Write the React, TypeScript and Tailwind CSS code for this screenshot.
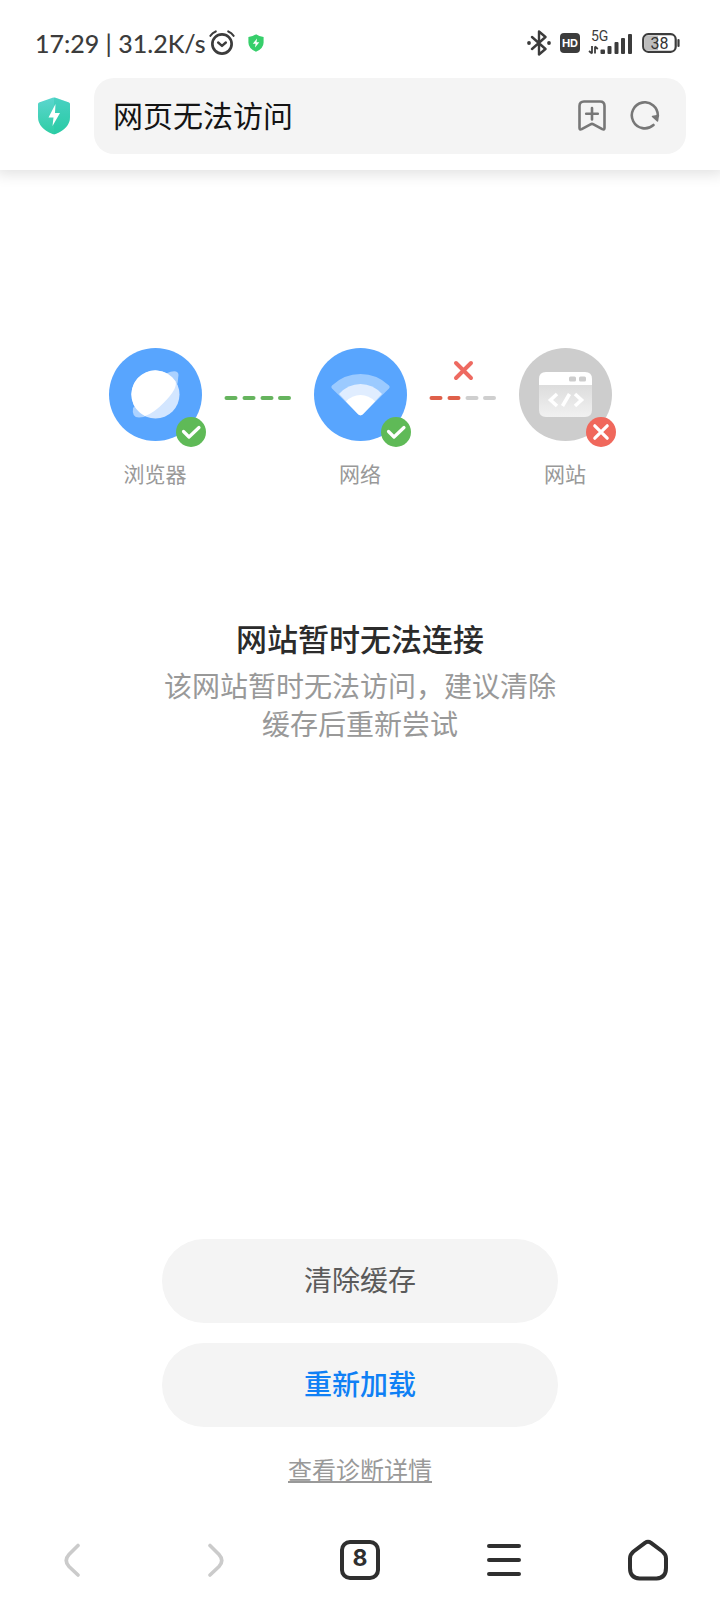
import type { ReactNode } from "react";

const StatusBar = function () {
  return (
    <div className="flex h-[78px] items-center justify-between pt-2 pl-[35px] pr-10 text-[#3c3c3c]">
      <div className="flex items-center">
        <span className="font-['Lato'] text-[25px] leading-8 font-medium">17:29 | 31.2K/s</span>
        <svg viewBox="0 0 27 27" className="ml-[3px] h-[26px] w-[26px]" fill="none" stroke="currentColor" strokeWidth="2.8" strokeLinecap="round" strokeLinejoin="round">
          <circle cx="13.5" cy="14.5" r="10" />
          <path d="M9.5 13l4 3.5 4-3.5" strokeWidth="2.5" />
          <path d="M1.5 6Q3.5 2.8 7 1.5M25.5 6Q23.5 2.8 20 1.5" strokeWidth="2.2" />
        </svg>
        <svg viewBox="0 0 16 18" className="ml-[13px] h-[18px] w-4">
          <path d="M8 0.3Q11 2.6 15.6 3V8.5Q15.6 14.5 8 17.8Q0.4 14.5 0.4 8.5V3Q5 2.6 8 0.3Z" fill="#37cf6b" />
          <path d="M9 4.5L4.8 9.8H7.6L7 13.5L11.3 8.2H8.5Z" fill="#fff" />
        </svg>
      </div>

      <div className="flex items-center">
        <svg viewBox="0 0 24 26" className="h-[26px] w-6" fill="none" stroke="currentColor" strokeWidth="2.4" strokeLinecap="round" strokeLinejoin="round">
          <path d="M5 7L18.5 19L12 24.5V1.5L18.5 7L5 19" />
          <circle cx="2" cy="13" r="1.9" fill="currentColor" stroke="none" />
          <circle cx="22" cy="13" r="1.9" fill="currentColor" stroke="none" />
        </svg>
        <span className="ml-[9px] flex h-5 w-5 items-center justify-center rounded-sm bg-[#3c3c3c] font-['Inter'] text-[11px] leading-none font-bold text-white">
          HD
        </span>
        <svg viewBox="0 -5 46 36" className="ml-2 h-9 w-[46px]" fill="currentColor">
          <text x="3" y="11" fontSize="14" fontFamily="Roboto, sans-serif">5G</text>
          <path d="M4 16V23.5M1 21L4 23.5M7 23.5V16.5M7 16.5L9.8 19" fill="none" stroke="currentColor" strokeWidth="1.8" />
          <rect x="12.5" y="19.5" width="4.5" height="4.5" rx="1" />
          <rect x="19.5" y="16" width="4" height="8" rx="1" />
          <rect x="26.5" y="12" width="4" height="12" rx="1" />
          <rect x="33" y="8" width="4" height="16" rx="1" />
          <rect x="40" y="4" width="4" height="20" rx="1" />
        </svg>
        <svg viewBox="0 0 38 20" className="ml-2 h-5 w-[38px]">
          <rect x="3" y="3" width="13" height="14" fill="#bdbdbd" />
          <rect x="1.2" y="1.2" width="32.5" height="17.6" rx="5" fill="none" stroke="#3c3c3c" strokeWidth="2.2" />
          <path d="M36.5 7V13" stroke="#3c3c3c" strokeWidth="2.2" strokeLinecap="round" />
          <text x="17.5" y="15.5" textAnchor="middle" fontSize="16" fontFamily="Roboto, sans-serif" fill="#333">38</text>
        </svg>
      </div>
    </div>
  );
};

const AddressBar = function () {
  return (
    <div className="flex items-center gap-6 pr-[34px] pb-4 pl-[38px]">
      <svg viewBox="0 0 32 38" className="h-[38px] w-8 shrink-0">
        <defs>
          <linearGradient id="shield" x1="0" y1="0" x2="0" y2="1">
            <stop offset="0" stopColor="#5cd6cf" />
            <stop offset="1" stopColor="#2ecda4" />
          </linearGradient>
        </defs>
        <path d="M14.5 0.8Q16 0 17.5 0.8L31 5.5Q32 6 32 7V20Q32 31 17.5 37Q16 37.6 14.5 37Q0 31 0 20V7Q0 6 1 5.5Z" fill="url(#shield)" />
        <path d="M16 0.4Q17 0.5 17.5 0.8L31 5.5Q32 6 32 7V20Q32 31 17.5 37Q17 37.3 16 37.3Z" fill="#1fc7a4" opacity="0.3" />
        <path d="M17.5 7L10.5 20.5H15.5L14.5 29L22 16H17Z" fill="#fff" />
      </svg>
      <form className="flex h-[76px] min-w-0 flex-1 items-center rounded-[20px] bg-[#f4f4f4] pr-[26px] pl-[19px]">
        <input
          type="text"
          aria-label="网址"
          defaultValue="网页无法访问"
          className="min-w-0 flex-1 bg-transparent pb-1 text-3xl text-[#141414] outline-none"
        />
        <button type="button" aria-label="收藏" className="text-[#777]">
          <svg viewBox="0 0 28 32" className="h-8 w-7" fill="none" stroke="currentColor" strokeWidth="2.6" strokeLinecap="round" strokeLinejoin="round">
            <path d="M6 1.5H22Q26.5 1.5 26.5 6V28Q26.5 30.3 24.3 29.2L15.5 24.3Q14 23.5 12.5 24.3L3.7 29.2Q1.5 30.3 1.5 28V6Q1.5 1.5 6 1.5Z" />
            <path d="M14 8V19.5M8.2 13.8H19.8" />
          </svg>
        </button>
        <button type="button" aria-label="刷新" className="ml-6 text-[#777]">
          <svg viewBox="0 0 30 30" className="h-[30px] w-[30px]" fill="none" stroke="currentColor" strokeWidth="2.6" strokeLinecap="round" strokeLinejoin="round">
            <path d="M23.5 24A13 13 0 1 1 27.8 15" />
            <path d="M22.5 15.5L28.3 14.5L27.5 20Z" fill="currentColor" strokeWidth="1.5" />
          </svg>
        </button>
      </form>
    </div>
  );
};

const Badge = function ({ ok }: { ok: boolean }) {
  return (
    <svg viewBox="0 0 30 30" className="absolute -right-1 -bottom-1.5 h-[30px] w-[30px]" fill="none" stroke="#fff" strokeWidth="3.2" strokeLinecap="round" strokeLinejoin="round">
      <circle cx="15" cy="15" r="15" fill={ok ? "#5fba57" : "#f0685c"} stroke="none" />
      <path d={ok ? "M7.5 14.5L13 20L23 10.5" : "M8.8 8.8L21.2 21.2M21.2 8.8L8.8 21.2"} />
    </svg>
  );
};

const Step = function ({ label, ok, children }: { label: string; ok: boolean; children: ReactNode }) {
  return (
    <li className="flex w-[93px] flex-col items-center">
      <div className="relative h-[93px] w-[93px]">
        <svg viewBox="0 0 93 93" className="h-full w-full">
          <circle cx="46.5" cy="46.5" r="46.5" fill={ok ? "#58a5fe" : "#cdcdcd"} />
          {children}
        </svg>
        <Badge ok={ok}></Badge>
      </div>
      <span className="mt-5 text-[21px] leading-6 text-[#999]">{label}</span>
    </li>
  );
};

const Connector = function ({ ok }: { ok: boolean }) {
  return (
    <li aria-hidden="true" className="flex w-28 justify-center pt-2">
      <svg viewBox="0 0 68 54" className="h-[54px] w-[68px]" fill="none" strokeWidth="4" strokeLinecap="round">
        {!ok && <path d="M27 7L42 22M42 7L27 22" stroke="#ee6a61" />}
        <path d="M2.5 42H11.5M20.5 42H29.5" stroke={ok ? "#66b45e" : "#df604a"} />
        <path d="M38.5 42H47.5M56 42H65" stroke={ok ? "#66b45e" : "#cfcfcf"} />
      </svg>
    </li>
  );
};

const Diagnosis = function () {
  return (
    <ol className="flex justify-center">
      <Step label="浏览器" ok={true}>
        <path d="M57 25.5Q69 20.5 69.5 27Q69.5 43 55 57Q41 69 30 69.5Q22.5 69.5 24 60Z" fill="#fff" opacity="0.5" />
        <circle cx="46.5" cy="46.5" r="24" fill="#d3e6ff" />
        <path d="M66.5 33.3A24 24 0 1 0 36 68Q45 65 55 54.5Q69 40.5 66.5 33.3Z" fill="#fff" />
      </Step>
      <Connector ok={true}></Connector>
      <Step label="网络" ok={true}>
        <path d="M18 40.5Q16.5 39 18 37.5Q30 26 46.5 26Q63 26 75 37.5Q76.5 39 75 40.5L49 66Q46.5 68.5 44 66Z" fill="#9bcaff" />
        <path d="M25 46Q34 36 46.5 36Q59 36 68 46L49 66Q46.5 68.5 44 66Z" fill="#e0edff" />
        <path d="M32 53.5Q38 47 46.5 47Q55 47 61 53.5L49 66Q46.5 68.5 44 66Z" fill="#fff" />
      </Step>
      <Connector ok={false}></Connector>
      <Step label="网站" ok={false}>
        <defs>
          <linearGradient id="window" x1="0" y1="0" x2="0" y2="1">
            <stop offset="0" stopColor="#dcdcdc" />
            <stop offset="1" stopColor="#f1f1f1" />
          </linearGradient>
        </defs>
        <path d="M20 36H73V62Q73 69 66 69H27Q20 69 20 62Z" fill="url(#window)" />
        <path d="M20 37V31Q20 24 27 24H66Q73 24 73 31V37Z" fill="#fff" />
        <rect x="50" y="28.5" width="7" height="5" rx="1.5" fill="#cdcdcd" />
        <rect x="60" y="28.5" width="7" height="5" rx="1.5" fill="#cdcdcd" />
        <path d="M38 46L31.5 52L38 58M56 46L62.5 52L56 58M50.5 46L43.5 58" fill="none" stroke="#fff" strokeWidth="3.6" />
      </Step>
    </ol>
  );
};

const Message = function () {
  return (
    <section className="mt-[133px] flex flex-col items-center text-center">
      <h1 className="text-[31px] leading-10 font-medium text-[#2b2b2b]">网站暂时无法连接</h1>
      <p className="mt-2 w-[392px] max-w-full text-[28px] leading-[38px] text-[#999]">
        该网站暂时无法访问，建议清除缓存后重新尝试
      </p>
    </section>
  );
};

const Actions = function () {
  return (
    <section className="mt-auto flex flex-col items-center gap-5 pb-[34px]">
      <button type="button" className="h-[84px] w-[55%] rounded-full bg-[#f4f4f4] pb-1 text-[28px] text-[#5a5a5a]">
        清除缓存
      </button>
      <button type="button" className="h-[84px] w-[55%] rounded-full bg-[#f4f4f4] pb-1 text-[28px] font-medium text-[#0f80f5]">
        重新加载
      </button>
      <a href="#" className="mt-1.5 text-2xl leading-8 text-[#999] underline">
        查看诊断详情
      </a>
    </section>
  );
};

const NavBar = function () {
  return (
    <nav className="grid h-[81px] grid-cols-5 items-center justify-items-center text-[#2f2f2f]">
      <button type="button" aria-label="后退" className="text-[#cbcbcb]">
        <svg viewBox="0 0 16 34" className="h-[34px] w-4" fill="none" stroke="currentColor" strokeWidth="3.6" strokeLinecap="round">
          <path d="M14 2.5L5 11.5Q-0.5 17.5 5 23.5L14 32" />
        </svg>
      </button>
      <button type="button" aria-label="前进" className="text-[#cbcbcb]">
        <svg viewBox="0 0 16 34" className="h-[34px] w-4" fill="none" stroke="currentColor" strokeWidth="3.6" strokeLinecap="round">
          <path d="M2 2.5L11 11.5Q16.5 17.5 11 23.5L2 32" />
        </svg>
      </button>
      <button type="button" aria-label="标签页" className="flex h-10 w-10 items-center justify-center rounded-[10px] border-4 border-[#2f2f2f] pb-0.5 font-['Inter'] text-[23px] leading-none font-bold">
        8
      </button>
      <button type="button" aria-label="菜单">
        <svg viewBox="0 0 36 34" className="h-[34px] w-9" fill="none" stroke="currentColor" strokeWidth="4" strokeLinecap="round">
          <path d="M3 3H33M3 17H33M3 31H33" />
        </svg>
      </button>
      <button type="button" aria-label="主页">
        <svg viewBox="0 0 40 42" className="h-[42px] w-10" fill="none" stroke="currentColor" strokeWidth="4" strokeLinejoin="round">
          <path d="M17 3.8Q20 1.8 23 3.8L34.5 12.5Q38 15.5 38 19.5V29Q38 39 28.5 39.5H11.5Q2 39 2 29V19.5Q2 15.5 5.5 12.5Z" />
        </svg>
      </button>
    </nav>
  );
};

export default function App() {
  return (
    <div className="flex min-h-screen flex-col overflow-x-hidden bg-white font-['Noto_Sans_CJK_SC',sans-serif]">
      <header className="shadow-[0_0_14px_4px_rgba(0,0,0,0.12)]">
        <StatusBar></StatusBar>
        <AddressBar></AddressBar>
      </header>
      <main className="flex flex-1 flex-col pt-[178px]">
        <Diagnosis></Diagnosis>
        <Message></Message>
        <Actions></Actions>
      </main>
      <NavBar></NavBar>
    </div>
  );
}
